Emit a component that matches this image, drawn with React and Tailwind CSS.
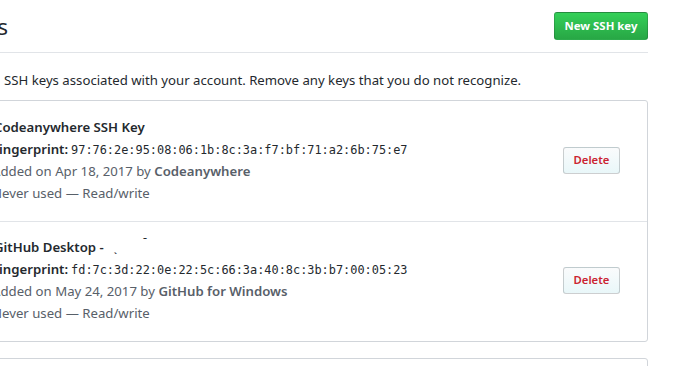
function KeyRow({ title, fp, addedOn, by, pt, last }) {
  return (
    <div
      className={`flex items-center justify-between pl-[15px] pr-[27px] pb-[17px] ${pt} ${last ? "" : "border-b border-[#e1e4e8]"}`}
    >
      <div className="flex flex-col text-[13.2px] leading-[22px]">
        <div className="h-[22px] pl-[2px] font-semibold text-[#24292e] whitespace-nowrap">{title}</div>
        <div className="h-[22px] flex items-baseline whitespace-nowrap">
          <span className="font-semibold text-[#24292e]">Fingerprint:</span>
          <span className="ml-[3px] font-['DejaVu_Sans_Mono',monospace] text-[11.9px] leading-[22px] text-[#24292e]">{fp}</span>
        </div>
        <div className="h-[22px] text-[#586069] whitespace-nowrap">
          Added on {addedOn} by <span className="font-semibold">{by}</span>
        </div>
        <div className="h-[22px] text-[#586069] whitespace-nowrap">Never used — Read/write</div>
      </div>
      <button className="h-[27px] w-[57px] rounded-[3px] border border-[#1b1f2333] bg-gradient-to-b from-[#fafbfc] to-[#e9f7f9] text-[11.3px] font-semibold text-[#cb2431]">
        Delete
      </button>
    </div>
  );
}

export default function App() {
  return (
    <div className="w-[680px] h-[366px] overflow-hidden bg-white font-['Noto_Sans',sans-serif] text-[#24292e]">
      <div className="w-[648px] h-[53px] flex items-center justify-between border-b border-[#e1e4e8]">
        <div className="w-[8px] flex justify-end mt-[2px]">
          <h2 className="whitespace-nowrap text-[22.6px] leading-[28px] font-normal">SSH keys</h2>
        </div>
        <button className="h-[28px] w-[94px] rounded-[3px] border border-[#1b1f2333] bg-gradient-to-b from-[#34d058] to-[#28a745] text-[11.4px] font-bold text-white">
          New SSH key
        </button>
      </div>

      <div className="mt-[17px] flex h-[20px] items-center text-[13.2px] leading-[20px] text-[#24292e] whitespace-nowrap">
        <div className="ml-[-2px] w-0 flex justify-end shrink-0">
          <span className="whitespace-nowrap">This is a list of</span>
        </div>
        <span className="ml-[6px]">SSH keys associated with your account. Remove any keys that you do not recognize.</span>
      </div>

      <div className="mt-[10px] ml-[-24px] w-[672px] rounded-[3px] border border-[#d1d5da]">
        <KeyRow
          title="Codeanywhere SSH Key"
          fp="97:76:2e:95:08:06:1b:8c:3a:f7:bf:71:a2:6b:75:e7"
          addedOn="Apr 18, 2017"
          by="Codeanywhere"
          pt="pt-[15px]"
        />
        <KeyRow
          title={
            <span>
              GitHub Desktop -
              <span className="ml-[10px] text-[10px] text-[#24292e]">ˎ</span>
              <span className="ml-[26px] relative top-[-6px] text-[10px] text-[#24292e]">ˉ</span>
            </span>
          }
          fp="fd:7c:3d:22:0e:22:5c:66:3a:40:8c:3b:b7:00:05:23"
          addedOn="May 24, 2017"
          by="GitHub for Windows"
          pt="pt-[14px]"
          last
        />
      </div>

      <div className="mt-[16px] ml-[-24px] w-[672px] h-[60px] rounded-t-[3px] border border-[#d1d5da]"></div>
    </div>
  );
}
